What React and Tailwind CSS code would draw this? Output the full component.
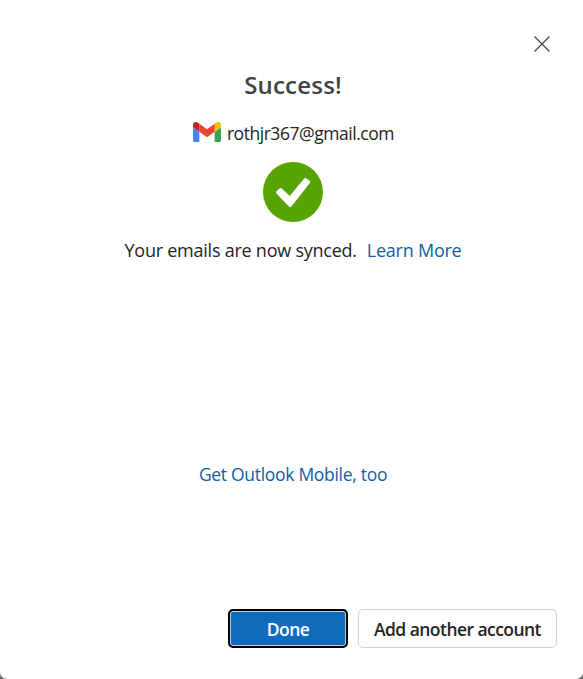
function GmailLogo() {
  return (
    <svg className="h-5 w-7 shrink-0" viewBox="52 42 88 66" preserveAspectRatio="none" aria-hidden="true">
      <path fill="#4285f4" d="M58 108h14V74L52 59v43c0 3.32 2.69 6 6 6" />
      <path fill="#34a853" d="M120 108h14c3.32 0 6-2.69 6-6V59l-20 15" />
      <path fill="#fbbc04" d="M120 48v26l20-15v-8c0-7.42-8.47-11.65-14.4-7.2" />
      <path fill="#ea4335" d="M72 74V48l24 18 24-18v26L96 92" />
      <path fill="#c5221f" d="M52 51v8l20 15V48l-5.6-4.2c-5.94-4.45-14.4-.22-14.4 7.2" />
    </svg>
  );
}

function SuccessMark() {
  return (
    <svg className="size-[60px]" viewBox="0 0 60 60" aria-hidden="true">
      <circle cx="30" cy="30" r="30" fill="#57a300" />
      <path d="M17.8 27.5 26.8 36.2 42.3 17.5 45.7 20 27.2 43.6 14.5 30.4Z" fill="#fff" stroke="#fff" strokeWidth="3" strokeLinejoin="round" />
    </svg>
  );
}

export default function App() {
  return (
    <div className="h-[679px] w-[583px] overflow-hidden bg-[#6f6f6f] font-['Open_Sans','Noto_Sans',sans-serif]">
      <main className="flex h-full flex-col rounded-b-[7px] bg-white text-lg leading-6 text-[#242424]">
        <div className="flex h-[52px] shrink-0 items-end justify-end pr-[33px]">
          <button aria-label="Close" className="size-4">
            <svg className="size-4" viewBox="0 0 16 16" stroke="#424242" strokeWidth="1.2" aria-hidden="true">
              <path d="M.5.5l15 15M15.5.5l-15 15" />
            </svg>
          </button>
        </div>
        <section className="flex grow flex-col items-center pl-[3px]">
          <h1 className="mt-[17px] text-2xl font-semibold leading-8 tracking-[0.2px] text-[#424242]">Success!</h1>
          <div className="mt-[19px] flex h-6 items-center gap-1.5 pl-px">
            <GmailLogo />
            <span className="mt-0.5 whitespace-nowrap text-[17.5px] tracking-[-0.46px]">rothjr367@gmail.com</span>
          </div>
          <div className="mt-[18px]"><SuccessMark /></div>
          <p className="mt-4 flex gap-2.5 whitespace-nowrap tracking-[-0.24px]">
            <span>Your emails are now synced.</span>
            <a href="#" className="text-[#115ea3]">Learn More</a>
          </p>
          <a href="#" className="mt-[200px] whitespace-nowrap text-[17.5px] tracking-[-0.3px] text-[#115ea3]">Get Outlook Mobile, too</a>
        </section>
        <footer className="mb-[31px] mr-[26px] flex h-[39px] shrink-0 justify-end gap-2.5 text-[17.5px] font-semibold">
          <button className="w-[120px] rounded-[5px] border-2 border-black bg-[#0f6cbd] tracking-[-0.5px] text-white shadow-[inset_0_0_0_1px_#b4cde6]">Done</button>
          <button className="w-[199px] whitespace-nowrap rounded-[5px] border border-[#d1d1d1] bg-white tracking-[-0.55px]">Add another account</button>
        </footer>
      </main>
    </div>
  );
}
